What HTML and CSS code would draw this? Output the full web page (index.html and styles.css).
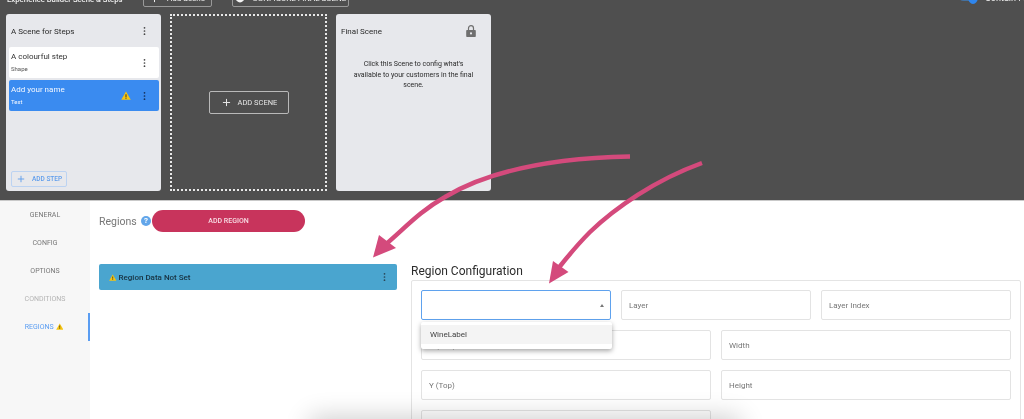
FILE: index.html
```html
<!DOCTYPE html>
<html lang="en">
<head>
<meta charset="utf-8">
<title>Regions</title>
<link rel="stylesheet" href="styles.css">
</head>
<body>
<div class="page">
  <section class="stage">
    <header class="topbar">
      <span class="top-title">Experience Builder Scene &amp; Steps</span>
      <span class="top-btn top-add">
        <svg class="ic-plus" viewBox="0 0 10 10"><path d="M5 1v8M1 5h8"/></svg>Add Scene
      </span>
      <span class="top-btn top-config">
        <svg class="ic-gear" viewBox="0 0 10 10"><circle cx="5" cy="5" r="4.4"/></svg>CONFIGURE FINAL SCENE
      </span>
      <span class="top-toggle"><span class="track"></span><span class="knob"></span></span>
      <span class="top-contain">Contain Fo</span>
    </header>
    <div class="scenes">
      <article class="scene">
        <div class="scene-head">
          <span>A Scene for Steps</span>
          <svg class="kebab" viewBox="0 0 4 14"><circle cx="2" cy="2.5" r="1.2"/><circle cx="2" cy="7" r="1.2"/><circle cx="2" cy="11.5" r="1.2"/></svg>
        </div>
        <div class="step">
          <div class="step-text"><div class="step-name">A colourful step</div><div class="step-type">Shape</div></div>
          <svg class="kebab" viewBox="0 0 4 14"><circle cx="2" cy="2.5" r="1.2"/><circle cx="2" cy="7" r="1.2"/><circle cx="2" cy="11.5" r="1.2"/></svg>
        </div>
        <div class="step step-active">
          <div class="step-text"><div class="step-name">Add your name</div><div class="step-type">Text</div></div>
          <svg class="warn warn-lg" viewBox="0 0 12 11"><path class="warn-fill" d="M6 .5 11.8 10.6H.2z"/><path class="warn-mark" d="M5.4 4h1.2v3.6H5.4zM5.4 8.2h1.2v1.2H5.4z"/></svg>
          <svg class="kebab" viewBox="0 0 4 14"><circle cx="2" cy="2.5" r="1.2"/><circle cx="2" cy="7" r="1.2"/><circle cx="2" cy="11.5" r="1.2"/></svg>
        </div>
        <div class="add-step">
          <svg class="ic-plus" viewBox="0 0 10 10"><path d="M5 1v8M1 5h8"/></svg>ADD STEP
        </div>
      </article>

      <div class="scene-drop">
        <div class="add-scene">
          <svg class="ic-plus" viewBox="0 0 10 10"><path d="M5 1v8M1 5h8"/></svg>ADD SCENE
        </div>
      </div>

      <article class="scene">
        <div class="scene-head final-head">
          <span>Final Scene</span>
          <svg class="lock" viewBox="0 0 10 13"><path d="M1 5h8a.8.8 0 0 1 .8.8v5.4a.8.8 0 0 1-.8.8H1a.8.8 0 0 1-.8-.8V5.800A.8.800 0 0 1 1 5zM5 7.300a1.100 1.100 0 1 0 0 2.200 1.100 1.100 0 0 0 0-2.200z" fill-rule="evenodd"/><path class="lock-arc" d="M2.500 5.200V3.200a2.500 2.500 0 0 1 5 0v2"/></svg>
        </div>
        <p class="final-text">Click this Scene to config what's available to your customers in the final scene.</p>
      </article>
    </div>
  </section>

  <section class="editor">
    <nav class="side">
      <a class="side-item">GENERAL</a>
      <a class="side-item">CONFIG</a>
      <a class="side-item">OPTIONS</a>
      <a class="side-item side-off">CONDITIONS</a>
      <a class="side-item side-on">REGIONS
        <svg class="warn warn-sm" viewBox="0 0 12 11"><path class="warn-fill" d="M6 .5 11.800 10.600H.200z"/><path class="warn-mark" d="M5.400 4h1.200v3.600H5.400zM5.400 8.200h1.200v1.200H5.400z"/></svg>
      </a>
    </nav>
    <div class="regions">
      <div class="regions-head">
        <span class="regions-title">Regions</span>
        <span class="help">?</span>
        <span class="add-region">ADD REGION</span>
      </div>
      <div class="region-row">
        <svg class="warn warn-sm" viewBox="0 0 12 11"><path class="warn-fill" d="M6 .5 11.800 10.600H.200z"/><path class="warn-mark" d="M5.400 4h1.200v3.600H5.400zM5.400 8.200h1.200v1.200H5.400z"/></svg>
        <span class="region-name">Region Data Not Set</span>
        <svg class="kebab" viewBox="0 0 4 14"><circle cx="2" cy="2.500" r="1.2"/><circle cx="2" cy="7" r="1.2"/><circle cx="2" cy="11.500" r="1.2"/></svg>
      </div>
    </div>
    <div class="config">
      <h2 class="config-title">Region Configuration</h2>
      <div class="config-box">
        <div class="grid-3">
          <div class="field field-focus">
            <span class="caret"></span>
            <div class="menu"><div class="menu-item">WineLabel</div></div>
          </div>
          <div class="field">Layer</div>
          <div class="field">Layer Index</div>
        </div>
        <div class="grid-2">
          <div class="field">X (Left)</div>
          <div class="field">Width</div>
          <div class="field">Y (Top)</div>
          <div class="field">Height</div>
          <div class="field"></div>
        </div>
      </div>
    </div>
  </section>

  <div class="bottom-shade"></div>

  <svg class="arrows" viewBox="0 0 1024 419">
    <path class="arrow-line" d="M630 156.500C555 158 490 170 445 197 420 211 405 228 385 245"/>
    <path class="arrow-head" d="M373 257.500 379 235 396 248z"/>
    <path class="arrow-line" d="M702 163C655 180 615 208 590 232 578 244 568 256 557 270"/>
    <path class="arrow-head" d="M549 283.500 553 261 568.500 272z"/>
  </svg>
</div>
</body>
</html>
```

FILE: styles.css
```css
* { box-sizing: border-box; }

html, body { margin: 0; padding: 0; background: #fff; }

body {
  font-family: Roboto, "Liberation Sans", sans-serif;
  color: #333;
}

.page {
  position: relative;
  width: 1024px;
  height: 419px;
  overflow: hidden;
  filter: blur(0.45px);
}

/* dark stage */
.stage {
  height: 201px;
  background: #4f4f4f;
  border-bottom: 1px solid #c9c9c9;
}

.topbar {
  position: relative;
  height: 14px;
  display: flex;
  align-items: flex-end;
  color: #f2f2f2;
  font-size: 7.700px;
  padding-left: 7px;
}

.top-title {
  flex: none;
  width: 136px;
  height: 10px;
  margin-bottom: 9.500px;
  line-height: 10px;
  white-space: nowrap;
  font-weight: 500;
}

.top-btn {
  flex: none;
  height: 20px;
  margin-bottom: 7px;
  border: 1px solid #999;
  border-radius: 2px;
  display: flex;
  align-items: flex-end;
  justify-content: center;
  gap: 8px;
  padding-bottom: 3px;
  font-size: 8px;
  line-height: 8px;
  white-space: nowrap;
}

.top-add { width: 69px; }

.top-config { width: 117px; margin-left: 20px; }

.top-btn .ic-plus { width: 9px; height: 9px; }

.ic-gear { width: 10px; height: 10px; fill: #f2f2f2; }

.top-toggle {
  position: relative;
  flex: none;
  width: 20px;
  height: 14px;
  margin-left: 609px;
  margin-bottom: 10px;
}

.track {
  position: absolute;
  left: 0;
  right: 3px;
  top: 0;
  bottom: 3px;
  border-radius: 6px;
  background: #45719f;
}

.knob {
  position: absolute;
  right: 0;
  top: 0;
  bottom: 0;
  width: 10px;
  border-radius: 50%;
  background: #2f86ee;
}

.top-contain {
  flex: none;
  margin-left: 7px;
  margin-bottom: 11px;
  font-size: 9px;
  line-height: 10px;
  white-space: nowrap;
}

.ic-plus {
  fill: none;
  stroke: currentColor;
  stroke-width: 1.100;
}

.scenes {
  display: flex;
  align-items: stretch;
  height: 177px;
  padding-left: 6px;
  gap: 9px;
}

.scene {
  width: 155px;
  background: #e7e8ec;
  border-radius: 3px;
  display: flex;
  flex-direction: column;
  padding: 0 2.500px 4px;
}

.scene-head {
  height: 33px;
  display: flex;
  align-items: center;
  justify-content: space-between;
  padding: 1px 13px 0 2.500px;
  font-size: 8px;
  color: #2b2b2b;
}

.kebab {
  width: 3px;
  height: 10px;
  flex: none;
  fill: #444;
}

.step {
  height: 31px;
  margin-bottom: 2px;
  background: #fff;
  border-radius: 2px;
  display: flex;
  align-items: center;
  padding-left: 2.500px;
  padding-right: 13px;
}

.step-text { flex: 1; }

.step-name {
  font-size: 8px;
  line-height: 10px;
  color: #333;
}

.step-type {
  font-size: 6px;
  line-height: 8px;
  color: #555;
  margin-top: 3px;
}

.step-active { background: #3a8bf0; }

.step-active .step-name,
.step-active .step-type { color: #f4f8ff; }

.step-active .kebab { fill: #16305a; }

.warn { flex: none; }

.warn-fill { fill: #f6c40f; }

.warn-mark { fill: #3a3320; }

.warn-lg { width: 10px; height: 9px; margin-right: 12px; }

.warn-sm { width: 7.500px; height: 7px; }

.add-step {
  margin-top: auto;
  margin-left: 2.500px;
  width: 56px;
  height: 16.500px;
  border: 1px solid #bcd3f2;
  border-radius: 2px;
  color: #5f9dec;
  font-size: 6.500px;
  font-weight: 500;
  display: flex;
  align-items: center;
  gap: 7px;
  padding-left: 5px;
}

.add-step .ic-plus { width: 8px; height: 8px; stroke: #5c9bec; }

.scene-drop {
  width: 157px;
  border: 2px dotted #e8e8e8;
  display: flex;
  align-items: center;
  justify-content: center;
}

.add-scene {
  width: 80px;
  height: 23px;
  border: 1px solid #b9b9b9;
  border-radius: 2px;
  color: #e6e6e6;
  font-size: 7.500px;
  display: flex;
  align-items: center;
  gap: 7px;
  padding-left: 12px;
}

.add-scene .ic-plus { width: 9px; height: 9px; }

.final-head { padding-right: 13px; }

.lock { width: 10px; height: 13px; fill: #6f6f6f; }

.lock-arc { fill: none; stroke: #6f6f6f; stroke-width: 1.200; }

.final-text {
  margin: 12px 14px 0;
  text-align: center;
  font-size: 7px;
  line-height: 10.500px;
  color: #2b2b2b;
}

/* lower editor */
.editor {
  height: 218px;
  display: flex;
  align-items: stretch;
  background: #fff;
}

.side {
  width: 90px;
  flex: none;
  background: #f7f7f7;
  display: flex;
  flex-direction: column;
}

.side-item {
  height: 28px;
  display: flex;
  align-items: center;
  justify-content: center;
  gap: 2px;
  font-size: 7px;
  color: #777;
  padding-bottom: 1px;
}

.side-off { color: #b4b4b4; }

.side-on {
  color: #5a9df2;
  border-right: 2px solid #5a9df2;
}

.regions {
  width: 321px;
  flex: none;
  padding: 9px 0 0 9px;
}

.regions-head {
  display: flex;
  align-items: center;
  height: 22px;
}

.regions-title {
  font-size: 10.500px;
  color: #777;
  width: 42px;
}

.help {
  width: 10px;
  height: 10px;
  border-radius: 50%;
  background: #62a6ea;
  color: #fff;
  font-size: 8px;
  font-weight: 700;
  line-height: 10px;
  text-align: center;
}

.add-region {
  width: 153px;
  height: 22px;
  margin-left: 1px;
  border-radius: 11px;
  background: #c8345c;
  color: #f7dbe3;
  font-size: 7px;
  font-weight: 500;
  display: flex;
  align-items: center;
  justify-content: center;
}

.region-row {
  margin-top: 32px;
  width: 298px;
  height: 26px;
  background: #4aa5cf;
  border-radius: 2px;
  display: flex;
  align-items: center;
  padding: 0 11px 0 10px;
  gap: 2px;
  font-size: 8px;
  font-weight: 500;
  color: #17303f;
}

.region-name { flex: 1; }

.region-row .kebab { fill: #2b4656; }

.config {
  flex: 1;
  padding: 0 4px 0 0;
  display: flex;
  flex-direction: column;
}

.config-title {
  flex: none;
  margin: 0;
  height: 79px;
  padding-top: 63px;
  font-size: 12px;
  font-weight: 400;
  line-height: 15px;
  color: #2c2c2c;
}

.config-box {
  flex: 1;
  border: 1px solid #e4e4e4;
  border-radius: 2px;
  padding: 9px 9px 0;
  display: flex;
  flex-direction: column;
  gap: 10px;
}

.grid-3 {
  display: grid;
  grid-template-columns: repeat(3, 190px);
  column-gap: 10px;
}

.grid-2 {
  display: grid;
  grid-template-columns: repeat(2, 290px);
  gap: 10px;
}

.field {
  position: relative;
  height: 30px;
  border: 1px solid #e3e3e3;
  border-radius: 2px;
  padding-left: 7px;
  display: flex;
  align-items: center;
  font-size: 8px;
  color: #777;
  background: #fff;
}

.field-focus { border-color: #5fa2ee; }

.caret {
  position: absolute;
  right: 6px;
  top: 13px;
  border-left: 2.500px solid transparent;
  border-right: 2.500px solid transparent;
  border-bottom: 3px solid #777;
}

.menu {
  position: absolute;
  left: -1px;
  top: 31px;
  width: 191px;
  height: 27px;
  padding-top: 3px;
  background: #fff;
  border-radius: 2px;
  box-shadow: 0 2px 5px rgba(0, 0, 0, .35);
  z-index: 2;
}

.menu-item {
  height: 19px;
  background: #f4f4f4;
  padding-left: 9px;
  display: flex;
  align-items: center;
  font-size: 8px;
  color: #444;
}

.bottom-shade {
  position: absolute;
  left: 320px;
  width: 410px;
  bottom: -22px;
  height: 14px;
  box-shadow: 0 0 26px 10px rgba(0, 0, 0, .2);
}

.arrows {
  position: absolute;
  left: 0;
  top: 0;
  width: 1024px;
  height: 419px;
  pointer-events: none;
}

.arrow-line {
  fill: none;
  stroke: #d44a7c;
  stroke-width: 4.500;
}

.arrow-head { fill: #d44a7c; }
```
